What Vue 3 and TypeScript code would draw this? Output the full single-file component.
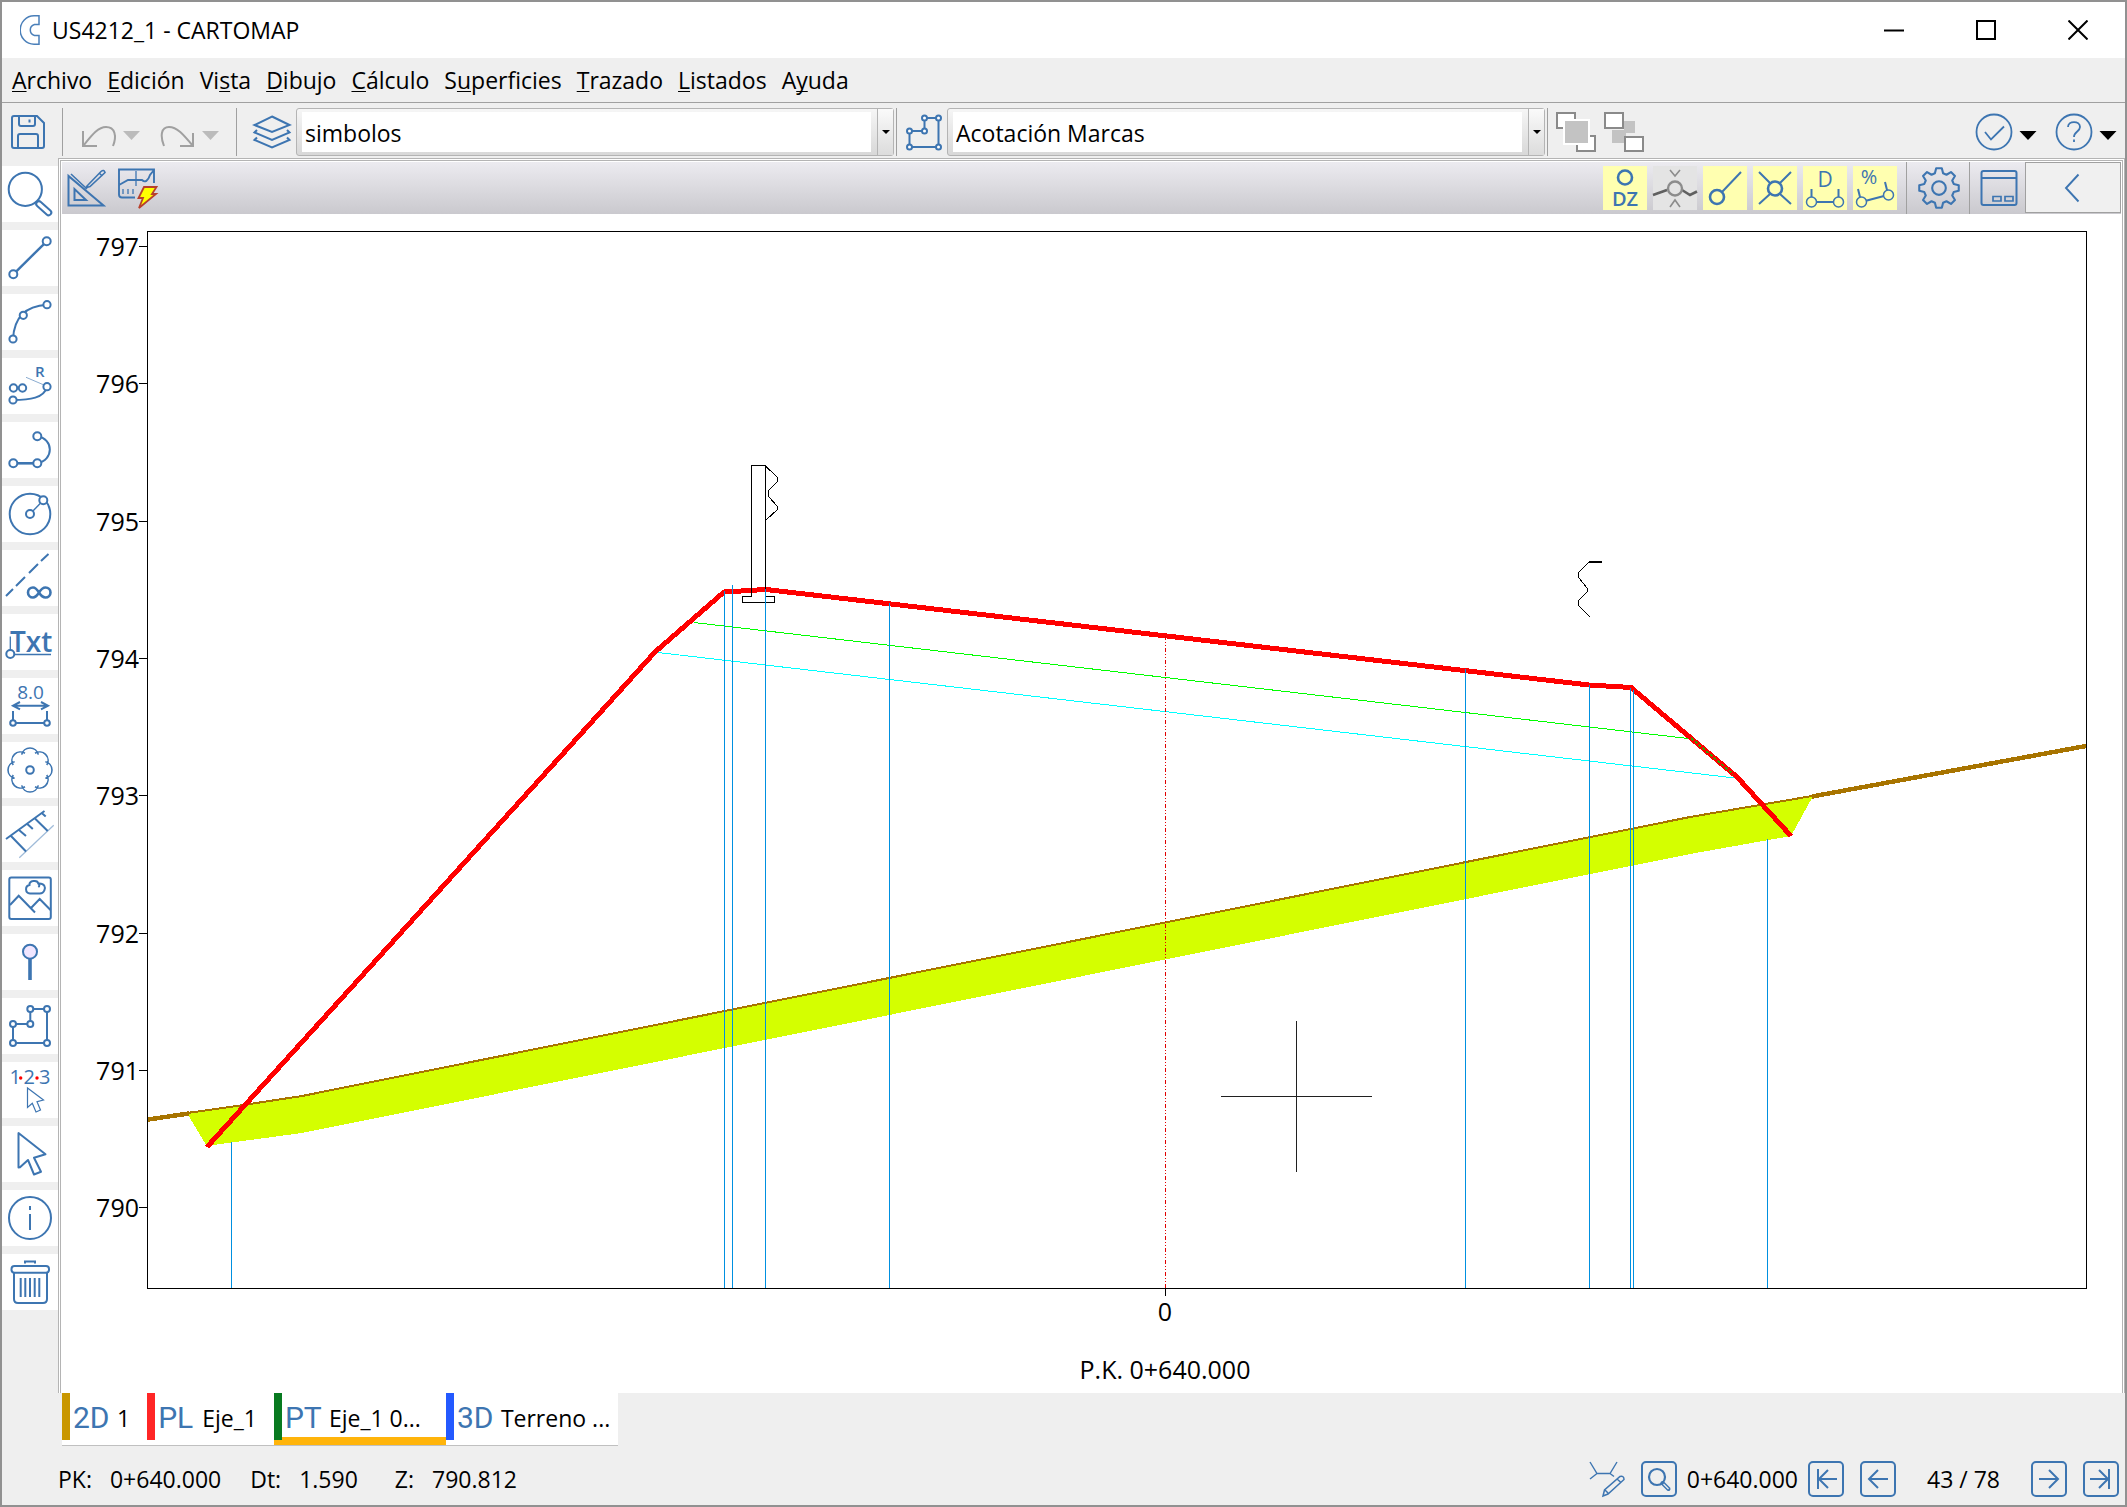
<script setup lang="ts">
import { ref } from 'vue'

interface MenuEntry { before: string; key: string; after: string }
interface Tool { name: string; art: string }
interface Tab { kind: string; label: string; color: string; wide: boolean }

const menus: MenuEntry[] = [
  { before: '', key: 'A', after: 'rchivo' },
  { before: '', key: 'E', after: 'dición' },
  { before: 'Vi', key: 's', after: 'ta' },
  { before: '', key: 'D', after: 'ibujo' },
  { before: '', key: 'C', after: 'álculo' },
  { before: 'S', key: 'u', after: 'perficies' },
  { before: '', key: 'T', after: 'razado' },
  { before: '', key: 'L', after: 'istados' },
  { before: 'A', key: 'y', after: 'uda' },
]

const node = (x: number, y: number, r = 4) => `<circle cx="${x}" cy="${y}" r="${r}" fill="#fff"/>`
const nodes = (list: number[][], r = 4) => list.map(([x, y]) => node(x, y, r)).join('')

// Tree symbol: eight overlapping lobes round the centre of the 56-unit box
const lobes = Array.from({ length: 8 }, (_, k) => {
  const a = (k * Math.PI) / 4
  const cx = 28 + 13.5 * Math.cos(a)
  const cy = 28 + 13.5 * Math.sin(a)
  const h = 1.35
  const p = (t: number) => `${(cx + 8.5 * Math.cos(t)).toFixed(2)} ${(cy + 8.5 * Math.sin(t)).toFixed(2)}`
  return `M${p(a - h)}A8.5 8.5 0 0 1 ${p(a + h)}`
}).join('')

const tools: Tool[] = [
  { name: 'Zoom', art: '<circle cx="23.3" cy="23.3" r="16.6"/><path d="M34.5 35.5l3 3" /><path d="M37 38L46.500 46.500" stroke-width="7.500" stroke-linecap="round"/><path d="M37 38L46.500 46.500" stroke="#fff" stroke-width="3.500" stroke-linecap="round"/>' },
  { name: 'Línea', art: '<path d="M11.300 44.300L44.700 11.300" stroke-width="2.400"/>' + nodes([[44.7, 11.3], [11.3, 44.3]]) },
  { name: 'Arco', art: '<path d="M11 45C12 25 22 12 45 10.700"/>' + nodes([[45, 10.7], [21.3, 21.3], [11, 45]], 3.6) },
  { name: 'Clotoide', art: '<path d="M11 42C28 42 42 40 45 29"/><path d="M24 19.300l18 7.700" stroke-width="1" opacity=".6"/><circle cx="11.500" cy="30" r="3.700"/><circle cx="20.500" cy="30" r="3.700"/>' + nodes([[45, 28.7], [11, 42]], 3.6) + '<text x="33" y="18.500" font-size="15" font-weight="600">R</text>' },
  { name: 'Polilínea', art: '<path d="M11 41.300H35" stroke-width="2.600"/><path d="M35.300 14.300C52 17 52 38 35.300 41.300"/>' + nodes([[35.3, 14.3], [35.3, 41.3], [11.3, 41.3]]) },
  { name: 'Círculo', art: '<circle cx="28" cy="28" r="20.300"/><path d="M28 28L41.300 14.300" stroke-width="1.400"/>' + nodes([[41.3, 14.3], [28, 28]]) },
  { name: 'Recta indefinida', art: '<path d="M4 46l7-7m3-3l9-9m4-4l9-9m3-3l7.500-7"/><path d="M37 42.500C34.500 38.500 33 37.500 31 37.500a5 5 0 0 0 0 10c2 0 3.500-1 6-5s4-5 6.500-5a5 5 0 0 1 0 10c-2.500 0-4-1-6.500-5z" stroke-width="2.600"/>' },
  { name: 'Texto', art: '<text x="8" y="38" font-size="28" font-weight="600">Txt</text><path d="M8.300 22.500V37M12 40.500H49" stroke-width="1.300"/>' + node(8.3, 40) },
  { name: 'Acotación', art: '<text x="28.500" y="21" font-size="19" font-weight="500" text-anchor="middle">8.0</text><path d="M11 27.700H46M18 24l-7 3.700 7 3.700M39 24l7 3.700-7 3.700M11 33V45H45V33"/>' + nodes([[11, 45], [45, 45]], 2.8) },
  { name: 'Árbol', art: `<path d="${lobes}" stroke-width="1.6"/>` + node(28, 28, 3.8) },
  { name: 'Talud', art: '<path d="M4 33L42.500 5M9 30L24 45.500M17 24l7 6M25.300 18l5.500 5M32.700 12.300l13 12.700M39.500 6.700l4.200 3.800"/><path d="M17.300 51.700l34.400-32.400" stroke-width="1.200" opacity=".5"/>' },
  { name: 'Imagen', art: '<rect x="7.300" y="7.500" width="41.500" height="41.500" rx="2"/><path d="M8 35l8.700-9.300L33 42.500M29 38l8.700-9 10.800 11M28 23.500a4.300 4.300 0 0 1-.5-8.500c-.5-4.500 8-5.500 8.800-1.500 6.500-.5 7.500 4 6 7-1 2.500-2.500 3-4.500 3zM36.300 13.500c1.500 1 1.200 2.800 0 3.500"/>' },
  { name: 'Punto', art: '<path d="M28 24V46" stroke-width="3.600"/><circle cx="28" cy="17.700" r="7" fill="#f1e6ff"/>' },
  { name: 'Superficie', art: '<path d="M11 45V26H28.300V11H45V45z"/>' + nodes([[11, 26], [28.3, 26], [28.3, 11], [45, 11], [45, 45], [11, 45]], 3) },
  { name: 'Numerar', art: '<g font-size="20" font-weight="500"><text x="7.500" y="21.700">1</text><text x="21.500" y="21.700">2</text><text x="37" y="21.700">3</text></g><g fill="#f00" stroke="none"><circle cx="18.700" cy="16" r="1.700"/><circle cx="35" cy="16" r="1.700"/></g><path d="M25.500 26V45.500L30.300 41.300 34 50 38.500 48 35 39.700 41.500 38z" stroke-width="1.200"/>' },
  { name: 'Selección', art: '<path d="M16.500 7V41.500L18 41.300 26 34 32 48.500 39 45.800 32 31.700 43.500 28.300z" stroke-linejoin="round"/>' },
  { name: 'Información', art: '<circle cx="28" cy="28" r="21"/><path d="M28 16v4M28 24V40"/>' },
  { name: 'Borrar', art: '<path d="M23 9.500V7.500H33V9.500M12 19V45q0 4 4 4H41q4 0 4-4V19"/><rect x="9.500" y="12" width="37.500" height="6.700" rx="3"/><path d="M18.700 24V43M23.300 24V43M28 24V43M32.700 24V43M37.300 24V43"/>' },
]

const snaps: { name: string; on: boolean; art: string }[] = [
  { name: 'Origen DZ', on: true, art: '<ellipse cx="22" cy="11.500" rx="7" ry="7" stroke-width="2.600"/><text x="22" y="40" font-size="20" font-weight="600" text-anchor="middle">DZ</text>' },
  { name: 'Próximo', on: false, art: '<path d="M0 29L14 24M29 24l8 5 7-3.500" stroke="#606060" stroke-width="2.600"/><circle cx="22" cy="22.500" r="7" stroke="#8c8c8c" stroke-width="2.400"/><path d="M17 4l5 6 5-6M17 41l5-7 5 7" stroke="#8c8c8c" stroke-width="1.600"/>' },
  { name: 'Extremo', on: true, art: '<circle cx="14" cy="31" r="7" stroke-width="2.600"/><path d="M19 26L38 6"/>' },
  { name: 'Intersección', on: true, art: '<circle cx="22" cy="22.500" r="7" stroke-width="2.600"/><path d="M6 6l11 11M27 17L38 6M17 28L6 38M27 28l11 10"/>' },
  { name: 'Distancia', on: true, art: '<text x="22" y="21" font-size="21" font-weight="500" text-anchor="middle">D</text><path d="M8.500 23V36M35.500 23V36M13 36H31"/><circle cx="8.500" cy="36" r="5" fill="#ffffb0" stroke-width="1.500"/><circle cx="35.500" cy="36" r="5" fill="#ffffb0" stroke-width="1.500"/>' },
  { name: 'Pendiente', on: true, art: '<text x="16" y="18" font-size="20" text-anchor="middle">%</text><path d="M5 23l3 12M32 16l3 12M12 35l19-5"/><circle cx="8.500" cy="36" r="5" fill="#ffffb0" stroke-width="1.500"/><circle cx="35.500" cy="29" r="5" fill="#ffffb0" stroke-width="1.500"/>' },
]

// Gear outline: eight teeth round the centre of the 40-unit box
const gear = (() => {
  const pts: string[] = []
  for (let k = 0; k < 8; k++) {
    const a = (k * Math.PI) / 4 - Math.PI / 2
    for (const [d, r] of [[-0.27, 14.5], [-0.14, 19], [0.14, 19], [0.27, 14.5]]) {
      pts.push(`${(20 + r * Math.cos(a + d)).toFixed(1)} ${(20 + r * Math.sin(a + d)).toFixed(1)}`)
    }
  }
  return `M${pts.join('L')}Z`
})()

const tabs: Tab[] = [
  { kind: '2D', label: '1', color: '#c99700', wide: false },
  { kind: 'PL', label: 'Eje_1', color: '#ff2626', wide: false },
  { kind: 'PT', label: 'Eje_1 0...', color: '#087a20', wide: true },
  { kind: '3D', label: 'Terreno ...', color: '#2459ff', wide: true },
]
const activeTab = ref('PT')

const layer = ref('simbolos')
const lineType = ref('Acotación Marcas')

const levels = [797, 796, 795, 794, 793, 792, 791, 790].map((z, i) => ({ z, y: Math.round(246 + i * 137.3) }))

const verticals: [number, number][] = [
  [231, 1142], [724, 591], [732, 585], [765, 589], [889, 603],
  [1465, 669], [1589, 685], [1630, 688], [1633, 690], [1767, 839],
]
</script>

<template>
  <div class="window">
    <header class="title-bar">
      <svg class="logo" viewBox="0 0 20 30" aria-hidden="true"><path d="M19 .8H14a13.800 14.200 0 0 0 0 28.400H19V20.500H14.500a5.700 5.700 0 0 1 0-11H19z" /></svg>
      <h1>US4212_1 - CARTOMAP</h1>
      <div class="window-buttons">
        <button type="button" aria-label="Minimizar"><svg viewBox="0 0 20 20"><path d="M0 10.500H20" /></svg></button>
        <button type="button" aria-label="Maximizar"><svg viewBox="0 0 20 20"><rect x="1" y="1" width="18" height="18" /></svg></button>
        <button type="button" aria-label="Cerrar"><svg viewBox="0 0 20 20"><path d="M.5.5l19 19M19.500.5l-19 19" /></svg></button>
      </div>
    </header>

    <nav class="menu-bar" aria-label="Menú principal">
      <button v-for="m in menus" :key="m.before + m.key + m.after" type="button">{{ m.before }}<u>{{ m.key }}</u>{{ m.after }}</button>
    </nav>

    <div class="toolbar">
      <button type="button" class="save" aria-label="Guardar">
        <svg viewBox="0 0 34 34" width="34" height="34" class="ic"><path d="M3 1H26L33 8V31q0 2-2 2H3q-2 0-2-2V3q0-2 2-2zM8 1V9q0 2 2 2H22q2 0 2-2V1M18.500 4.500v3M7 33V21q0-2 2-2H25q2 0 2 2V33" /></svg>
      </button>
      <span class="sep"></span>
      <button type="button" class="history" aria-label="Deshacer">
        <svg viewBox="0 0 60 22" width="60" height="22"><path d="M2 5V20H16M2 20C11 9 17 1 25 1C34 1 36 10 32 20" class="gray" /><path d="M42 5h17l-8.500 9z" fill="#bbb" /></svg>
      </button>
      <button type="button" class="history" aria-label="Rehacer">
        <svg viewBox="0 0 60 22" width="60" height="22"><path d="M33 7V20H20M33 20C23 8 17 1 9 1C1 1 0 10 4 20" class="gray" /><path d="M42 5h17l-8.500 9z" fill="#bbb" /></svg>
      </button>
      <span class="sep after-history"></span>
      <label class="combo-icon" for="layer" aria-label="Capa">
        <svg viewBox="0 0 38 34" width="38" height="34" class="ic"><path d="M19 1.500L36.500 10 19 17 1.500 10zM4 15l-2.500 2.500L19 25l17.500-7.500L34 15M4 22.500L1.500 25 19 32.500 36.500 25 34 22.500" /></svg>
      </label>
      <div class="combo">
        <select id="layer" v-model="layer"><option>simbolos</option></select>
        <span class="combo-arrow"></span>
      </div>
      <span class="sep tight"></span>
      <label class="combo-icon" for="line-type" aria-label="Tipo de línea">
        <svg viewBox="0 0 36 36" width="36" height="36" class="ic"><path d="M3.500 33V17H18.500V4H32.500V33z" /><g fill="#fff"><circle cx="3.500" cy="17" r="2.500" /><circle cx="18.500" cy="17" r="2.500" /><circle cx="18.500" cy="4" r="2.500" /><circle cx="32.500" cy="4" r="2.500" /><circle cx="32.500" cy="33" r="2.500" /><circle cx="3.500" cy="33" r="2.500" /></g></svg>
      </label>
      <div class="combo">
        <select id="line-type" v-model="lineType"><option>Acotación Marcas</option></select>
        <span class="combo-arrow"></span>
      </div>
      <span class="sep tight"></span>
      <button type="button" class="order" aria-label="Traer al frente">
        <svg viewBox="0 0 40 40" width="40" height="40"><g fill="#fff" stroke="#8a8a8a" stroke-width="2"><rect x="1" y="1" width="18" height="15" /><rect x="21" y="24" width="18" height="15" /></g><rect x="8" y="8" width="25" height="24" fill="#c3c3c3" stroke="#fff" stroke-width="2" /></svg>
      </button>
      <button type="button" class="order" aria-label="Enviar al fondo">
        <svg viewBox="0 0 40 40" width="40" height="40"><path d="M20 9H31V21H22V31H8V18H20z" fill="#c3c3c3" /><g fill="#fff" stroke="#8a8a8a" stroke-width="2"><rect x="1" y="1" width="18" height="15" /><rect x="21" y="25" width="18" height="14" /></g></svg>
      </button>
      <div class="right-tools">
        <button type="button" aria-label="Validar">
          <svg viewBox="0 0 62 38" width="62" height="38" class="ic"><circle cx="19" cy="19" r="17.500" stroke-width="1.800" /><path d="M10 19l6 7.500L29 13.500" stroke-width="1.800" /><path d="M44.500 18h17l-8.500 9z" fill="#000" stroke="none" /></svg>
        </button>
        <button type="button" aria-label="Ayuda">
          <svg viewBox="0 0 62 38" width="62" height="38" class="ic"><circle cx="19" cy="19" r="17.500" stroke-width="1.800" /><path d="M13 14c0-6.500 12-6.500 12 0 0 4.500-6 4.500-6 10M19 26.500v2.500" stroke-width="1.800" /><path d="M44.500 18h17l-8.500 9z" fill="#000" stroke="none" /></svg>
        </button>
      </div>
    </div>

    <div class="body">
      <aside class="side-tools" aria-label="Herramientas">
        <button v-for="t in tools" :key="t.name" type="button" :aria-label="t.name">
          <svg viewBox="0 0 56 56" class="ic" v-html="t.art"></svg>
        </button>
      </aside>

      <div class="main">
        <section class="view">
          <div class="view-bar">
            <button type="button" class="view-btn" aria-label="Editar perfil">
              <svg viewBox="0 0 40 40" width="40" height="40" class="ic"><path d="M1.500 8V37.500H36.500zM7.500 21V32H19z" /><path d="M4 6L20 21M20 18L34 3.500q3-2.500 4 1L23 18.500l-4 1.200zM32 5l3.500 3" stroke-width="1.600" /></svg>
            </button>
            <button type="button" class="view-btn" aria-label="Recalcular perfil">
              <svg viewBox="0 0 40 40" width="40" height="40" class="ic"><path d="M17 29.500H4q-3 0-3-3V1.500H36V15M1 17l9-5H24c3 3 6 1 8-5l4-5" stroke-width="1.900" /><path d="M18 3V18M5 21v5M10 21v5M15 21v5" stroke-width="1.300" /><path d="M26 19H38.500L34 26H38L21 40L25 30H20.500z" fill="#ff0" stroke="#b8402c" stroke-width="1.800" /></svg>
            </button>
            <div class="snaps">
              <button v-for="s in snaps" :key="s.name" type="button" class="snap" :class="{ on: s.on }" :aria-label="s.name">
                <svg viewBox="0 0 44 44" class="ic" v-html="s.art"></svg>
              </button>
            </div>
            <button type="button" class="cell" aria-label="Configuración">
              <svg viewBox="0 0 40 40" width="42" height="42" class="ic"><path :d="gear" stroke-linejoin="round" /><circle cx="20" cy="20" r="6.500" /></svg>
            </button>
            <button type="button" class="cell" aria-label="Ventana">
              <svg viewBox="0 0 38 36" width="38" height="36" class="ic"><rect x="1.500" y="1" width="35" height="34" rx="2" /><path d="M1.500 8H36.500" /><path d="M13 26.500h8v4.500h-8zM25 26.500h8v4.500h-8z" stroke-width="1.700" /></svg>
            </button>
            <button type="button" class="collapse" aria-label="Mostrar panel">
              <svg viewBox="0 0 16 28" width="16" height="28" class="ic"><path d="M14.500.5L2 14 14.500 27.500" stroke-width="1.900" /></svg>
            </button>
          </div>

          <svg class="chart" viewBox="62 214 2059 1179" role="img" aria-label="Perfil transversal P.K. 0+640.000">
            <g class="crisp">
              <polygon points="187,1113 302,1097 1690,818 1813,796 1791,836 1690,854 302,1133 213,1145 206,1145" fill="#d4ff00" />
              <g stroke="#a87400">
                <polyline points="187,1113 230,1107 302,1096 1690,817 1812,796" stroke-width="2" />
                <path d="M148 1119.500L189 1113.500M1812 796.500L2086 746" stroke-width="4.500" />
              </g>
              <path d="M694 622.500L1688 738.500" stroke="#0f0" />
              <path d="M658 652.500L1735 778" stroke="#0ff" />
              <polyline points="207,1147 655,652 724,592 766,589.500 1589,685 1631,687.500 1737,777 1791,836" stroke="#f00" stroke-width="5" />
              <path d="M1691 738L1733 774" stroke="#3a9a00" stroke-width="2" stroke-dasharray="3 2" />
              <g stroke="#000">
                <path d="M751.500 596V465.500H765.500V596M751.500 596.500H742.500V602.500H774.500V596.500H765.500" />
                <path d="M765.500 466l11.500 11v5l-8 8-1 3 1 4 8 9v4l-11 10" />
                <path d="M1602 562H1589L1579 572l-1 3 1 3 8 10v4l-8 8-1 3 1 3 11 11" />
              </g>
              <path d="M1602 562H1589" stroke="#000" stroke-width="2" />
              <path v-for="[x, y] in verticals" :key="x" :d="`M${x + 0.5} ${y}V1288`" stroke="#0090e0" />
              <path d="M1165.500 636V1288" stroke="#e00000" stroke-dasharray="4 2 1 2 1 2" />
              <path d="M1296.500 1021V1172M1221 1096.500H1372" stroke="#202020" />
              <rect x="147.500" y="231.500" width="1939" height="1057" stroke="#000" />
              <path d="M1165.500 1288V1296" stroke="#000" />
              <path v-for="l in levels" :key="l.z" :d="`M139 ${l.y + 0.5}H147`" stroke="#000" />
            </g>
            <g class="labels">
              <text v-for="l in levels" :key="l.z" x="139" :y="l.y + 10" text-anchor="end">{{ l.z }}</text>
              <text x="1165" y="1321" text-anchor="middle">0</text>
              <text x="1165" y="1379" text-anchor="middle">P.K. 0+640.000</text>
            </g>
          </svg>
        </section>

        <div class="tabs" role="tablist">
          <button
            v-for="t in tabs"
            :key="t.kind"
            type="button"
            role="tab"
            class="tab"
            :class="{ wide: t.wide, active: t.kind === activeTab }"
            :aria-selected="t.kind === activeTab"
            @click="activeTab = t.kind"
          >
            <span class="bar" :style="{ background: t.color }"></span>
            <span class="kind">{{ t.kind }}</span>
            <span class="name">{{ t.label }}</span>
          </button>
        </div>
      </div>
    </div>

    <footer class="status">
      <dl>
        <div><dt>PK:</dt><dd>0+640.000</dd></div>
        <div><dt>Dt:</dt><dd>1.590</dd></div>
        <div><dt>Z:</dt><dd>790.812</dd></div>
      </dl>
      <div class="pager">
        <button type="button" class="plain" aria-label="Editar sección">
          <svg viewBox="0 0 36 36" width="36" height="36" class="ic"><path d="M1 1L8 12.500H21L28 1M8 12.500L1 18M21 12.500l4 3" stroke-width="1.400" /><path d="M14 35l1.500-6L31 15.500q4-1 4 3L19 33zM28 18l4 3.500M16 29l3 3" stroke-width="1.500" /></svg>
        </button>
        <button type="button" class="boxed" aria-label="Buscar P.K."><svg viewBox="0 0 36 36" class="ic"><circle cx="16" cy="16" r="8" stroke-width="2.200" /><path d="M21.500 22l6 6" stroke-width="4" stroke-linecap="round" /><path d="M22.500 23l5 5" stroke="#efefef" stroke-width="1.200" /></svg></button>
        <span class="pk">0+640.000</span>
        <button type="button" class="boxed" aria-label="Primera"><svg viewBox="0 0 36 36" class="ic"><path d="M10 8V28M11 18H29M20 9l-9 9 9 9" /></svg></button>
        <button type="button" class="boxed" aria-label="Anterior"><svg viewBox="0 0 36 36" class="ic"><path d="M9 18H28M18 9l-9 9 9 9" /></svg></button>
        <span class="count">43 / 78</span>
        <button type="button" class="boxed" aria-label="Siguiente"><svg viewBox="0 0 36 36" class="ic"><path d="M8 18H27M18 9l9 9-9 9" /></svg></button>
        <button type="button" class="boxed" aria-label="Última"><svg viewBox="0 0 36 36" class="ic"><path d="M26 8V28M7 18H25M16 9l9 9-9 9" /></svg></button>
      </div>
    </footer>
  </div>
</template>

<style>
body { margin: 0; }
</style>

<style scoped>
.window {
  box-sizing: border-box;
  min-height: 100vh;
  display: flex;
  flex-direction: column;
  border: 2px solid #919191;
  background: #efefef;
  color: #000;
  font-family: "Open Sans", "Noto Sans", sans-serif;
  font-size: 23px;
  line-height: 32px;
}
button {
  font: inherit;
  color: inherit;
  background: none;
  border: 0;
  padding: 0;
  margin: 0;
  display: block;
}
svg { display: block; }
.ic { fill: none; stroke: #3d75b1; stroke-width: 2; overflow: visible; }
.ic :deep(text) { fill: #3d75b1; stroke: none; line-height: 1; font-family: "Open Sans", "Noto Sans", sans-serif; }

.title-bar {
  height: 56px;
  display: flex;
  align-items: center;
  gap: 12px;
  padding-left: 18px;
  background: #fff;
}
.logo { width: 20px; height: 30px; fill: none; stroke: #4a7fb9; stroke-width: 1.5; }
h1 { margin: 0; font-size: 23px; font-weight: 400; line-height: 32px; }
.window-buttons { display: flex; margin-left: auto; padding-right: 1px; }
.window-buttons button { width: 92px; height: 54px; display: grid; place-items: center; }
.window-buttons svg { width: 20px; height: 20px; fill: none; stroke: #000; stroke-width: 2; }

.menu-bar {
  display: flex;
  gap: 15px;
  padding: 6px 10px;
  border-bottom: 1px solid #a0a0a0;
}
u { text-decoration-thickness: 1px; text-underline-offset: 2px; text-decoration-skip-ink: none; }

.toolbar {
  height: 52px;
  padding-top: 3px;
  display: flex;
  align-items: center;
}
.save { padding: 0 8px 0 9px; }
.sep { width: 1px; height: 48px; background: #a0a0a0; margin: 0 9px; }
.sep.tight { margin: 0 2px; }
.sep.after-history { margin-left: 6px; }
.history { padding: 9px 10px 0 9px; }
.combo-icon { padding: 0 5px 0 7px; }
.combo {
  position: relative;
  box-sizing: border-box;
  flex: 0 1 598px;
  min-width: 0;
  height: 48px;
  padding: 3px 22px 3px 5px;
  border: 1px solid #b4b4b4;
  border-radius: 3px;
  background: linear-gradient(#f6f6f6, #d8d8d8);
}
.combo select {
  appearance: none;
  width: 100%;
  height: 40px;
  box-sizing: border-box;
  border: 0;
  border-radius: 0;
  padding: 2px 3px 0;
  background: #fff;
  font: inherit;
  color: inherit;
}
.combo-arrow {
  position: absolute;
  top: 0;
  right: 0;
  bottom: 0;
  width: 15px;
  border-left: 1px solid #b4b4b4;
  background: linear-gradient(#fafafa, #dcdcdc);
  pointer-events: none;
  display: grid;
  place-items: center;
}
.combo-arrow::after { content: ""; border: 4px solid transparent; border-top-color: #000; border-bottom: 0; }
.gray { fill: none; stroke: #a0a0a0; stroke-width: 2; }
.order { margin: 0 2px 0 6px; }
.right-tools { margin-left: auto; display: flex; gap: 18px; padding-right: 8px; }

.body { display: flex; flex: 1; }
.side-tools { flex: 0 0 56px; display: flex; flex-direction: column; gap: 8px; padding-top: 8px; }
.side-tools button { width: 56px; height: 56px; background: #fff; }
.side-tools svg { width: 56px; height: 56px; }
.main { flex: 1; min-width: 0; }
.view { border: 3px double #b4b4b4; border-bottom: 0; padding: 1px 1px 0; background: #fff; }
.view-bar {
  height: 52px;
  display: flex;
  align-items: center;
  background: linear-gradient(#ecebf0, #cac9ce);
}
.view-btn { margin-left: 5px; }
.view-btn + .view-btn { margin-left: 11px; }
.snaps { display: flex; gap: 6px; margin-left: auto; margin-right: 9px; }
.snap { width: 44px; height: 44px; background: #e4e4e4; }
.snap.on { background: #ffffb0; }
.snap svg { width: 44px; height: 44px; }
.cell { height: 52px; padding: 0 9px 0 11px; border-left: 1px solid #a0a0a0; }
.cell + .cell { padding: 0 7px 0 10px; }
.collapse {
  box-sizing: border-box;
  width: 96px;
  height: 51px;
  align-self: flex-start;
  padding-right: 3px;
  border: 1px solid #a0a0a0;
  background: #f0f0f0;
  display: grid;
  place-items: center;
}
.chart { width: 100%; height: auto; }
.crisp { shape-rendering: crispEdges; fill: none; stroke-width: 1; }
.labels { font-family: "Open Sans", "Noto Sans", sans-serif; font-size: 25px; fill: #000; }

.tabs { display: flex; padding-left: 4px; }
.tab {
  box-sizing: border-box;
  height: 53px;
  display: flex;
  align-items: flex-start;
  padding-right: 17px;
  background: #fff;
  border-bottom: 1px solid #c0c0c0;
}
.tab.wide { flex: 0 0 172px; padding-right: 0; }
.tab.active { background: linear-gradient(#fff 44px, #ffb40a 44px); }
.bar { flex: 0 0 8px; height: 47px; }
.kind { flex: 0 0 44px; margin-left: 3px; text-align: left; font-family: Roboto, "Open Sans", sans-serif; font-size: 30px; line-height: 50px; color: #3d75b1; }
.name { line-height: 50px; white-space: nowrap; }

.status {
  box-sizing: border-box;
  height: 59px;
  display: flex;
  align-items: center;
  padding: 7px 6px 0 56px;
}
dl { display: flex; gap: 29px; margin: 0; }
dl div { display: flex; gap: 18px; }
dl div:nth-child(2) { margin-right: 8px; }
dt, dd { margin: 0; }
.pager { margin-left: auto; display: flex; align-items: center; gap: 16px; }
.boxed { box-sizing: border-box; width: 36px; height: 36px; border: 2px solid #3d75b1; border-radius: 5px; }
.boxed svg { width: 36px; height: 36px; margin: -2px; }
.pk { margin: 0 -6px; }
.count { margin: 0 15px; }
</style>
